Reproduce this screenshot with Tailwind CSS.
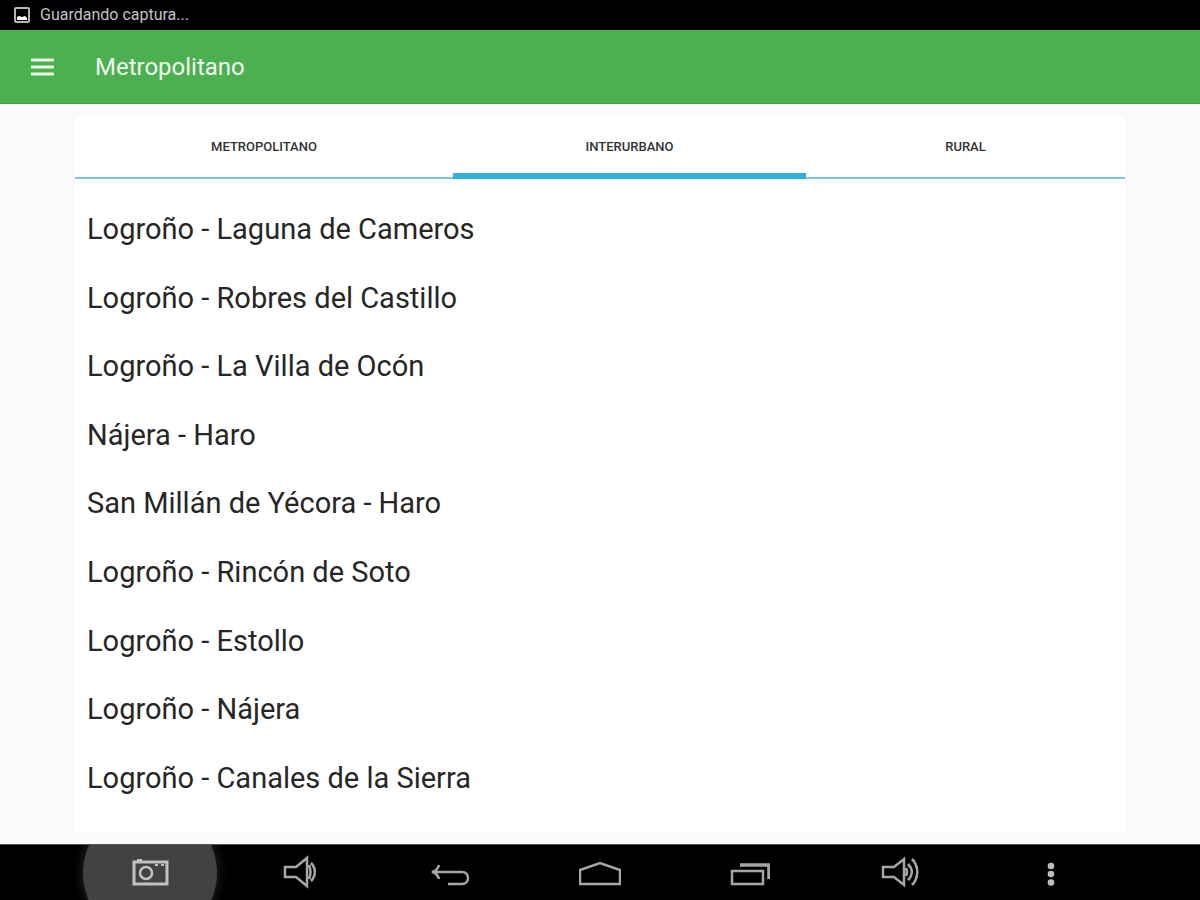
<!DOCTYPE html>
<html lang="es">
<head>
<meta charset="utf-8">
<meta name="viewport" content="width=device-width, initial-scale=1">
<title>Metropolitano</title>
<script src="https://cdn.jsdelivr.net/npm/@tailwindcss/browser@4"></script>
</head>
<body class="flex min-h-screen flex-col bg-[#fafafa] font-['Roboto',sans-serif] text-[#262626]">
  <div class="flex h-[30px] items-center gap-2.5 bg-black px-3.5 text-base text-[#c4c4c4]">
    <svg class="size-4" viewBox="0 0 16 16" fill="none" aria-hidden="true"><rect x="1" y="1" width="14" height="14" rx="1" stroke="#b4b4b4" stroke-width="2"/><path d="M3 10l2-1 3 1 3-1 2 2v2H3z" fill="#fff"/></svg>
    <span>Guardando captura...</span>
  </div>
  <header class="flex h-[74px] items-center gap-10 border-b border-[#43a047] bg-[#4caf50] px-[30px] text-white">
    <button type="button" aria-label="Abrir menú">
      <svg class="h-6 w-[25px]" viewBox="0 0 25 24" fill="none" stroke="#eefbe9" stroke-width="3" aria-hidden="true"><path d="M1 5h23M1 12h23M1 19h23"/></svg>
    </button>
    <h1 class="text-2xl text-[#f1fbef]">Metropolitano</h1>
  </header>
  <main class="flex flex-1 flex-col px-[6.25%] py-3">
    <div class="flex flex-1 flex-col bg-white">
      <div role="tablist" class="flex h-[63px] text-[13px] font-medium text-[#333]">
        <button type="button" role="tab" aria-selected="false" class="flex-[378] border-b-2 border-[#7cc8d2]">METROPOLITANO</button>
        <button type="button" role="tab" aria-selected="true" class="flex-[353] border-b-6 border-[#33b1d9] pt-1">INTERURBANO</button>
        <button type="button" role="tab" aria-selected="false" class="flex-[319] border-b-2 border-[#7cc8d2]">RURAL</button>
      </div>
      <ul class="mt-4 mb-5 grid flex-1 auto-rows-fr items-center px-3 text-[29px] leading-9">
        <li>Logroño - Laguna de Cameros</li>
        <li>Logroño - Robres del Castillo</li>
        <li>Logroño - La Villa de Ocón</li>
        <li>Nájera - Haro</li>
        <li>San Millán de Yécora - Haro</li>
        <li>Logroño - Rincón de Soto</li>
        <li>Logroño - Estollo</li>
        <li>Logroño - Nájera</li>
        <li>Logroño - Canales de la Sierra</li>
      </ul>
    </div>
  </main>
  <nav aria-label="Sistema" class="grid h-14 grid-cols-7 overflow-hidden border-t border-[#555] bg-black px-[6.25%] text-[#a6a6a6]">
    <button type="button" aria-label="Captura de pantalla" class="relative flex items-center justify-center">
      <span class="absolute size-[134px] rounded-full bg-[#424242] shadow-[0_0_12px_#2a2a2a]"></span>
      <svg class="relative h-10 w-10" viewBox="0 0 40 40" fill="none" stroke="#c2c2c2" stroke-width="2" aria-hidden="true"><rect x="4" y="9" width="33" height="22" stroke-width="3"/><circle cx="16" cy="20" r="6" stroke-width="2.5"/><path d="M7 7h5M25 12h3M31 12h3"/></svg>
    </button>
    <button type="button" aria-label="Bajar volumen" class="flex items-center justify-center">
      <svg class="h-10 w-10" viewBox="0 0 40 40" fill="none" stroke="currentColor" stroke-width="2.5" aria-hidden="true"><path d="M5 14h11l11-9v28l-11-9H5zM29 12q3 7 0 14M31 10c5 5 5 13 0 18"/></svg>
    </button>
    <button type="button" aria-label="Atrás" class="flex items-center justify-center">
      <svg class="h-10 w-10" viewBox="0 0 40 40" fill="none" stroke="currentColor" stroke-width="2.5" aria-hidden="true"><path d="M9 12c-1 4-3 6-7 7 4 1 6 3 7 7M3 19h29c8 0 8 12 0 12H18"/></svg>
    </button>
    <button type="button" aria-label="Inicio" class="flex items-center justify-center">
      <svg class="h-10 w-[42px]" viewBox="0 0 42 40" fill="none" stroke="currentColor" stroke-width="2.5" aria-hidden="true"><path d="M1 31V17L21 10l20 7v14z"/></svg>
    </button>
    <button type="button" aria-label="Aplicaciones recientes" class="flex items-center justify-center">
      <svg class="h-10 w-10" viewBox="0 0 40 40" fill="none" stroke="currentColor" aria-hidden="true"><path d="M10 12h29v14" stroke-width="3.5"/><path d="M2 18h31v13H2z" stroke-width="2.5"/></svg>
    </button>
    <button type="button" aria-label="Subir volumen" class="flex items-center justify-center">
      <svg class="h-10 w-10" viewBox="0 0 40 40" fill="none" stroke="currentColor" stroke-width="2.5" aria-hidden="true"><path d="M3 14h11l10-8v26l-10-8H3zM26 15q2 4 0 8M28 11c5 5 5 11 0 16M32 6c7 7 7 19 0 26"/></svg>
    </button>
    <button type="button" aria-label="Más opciones" class="flex items-center justify-center">
      <svg class="h-10 w-10" viewBox="0 0 40 40" fill="#bdbdbd" aria-hidden="true"><circle cx="21" cy="13" r="3.3"/><circle cx="21" cy="21" r="3.3"/><circle cx="21" cy="29.500" r="3.3"/></svg>
    </button>
  </nav>
</body>
</html>
